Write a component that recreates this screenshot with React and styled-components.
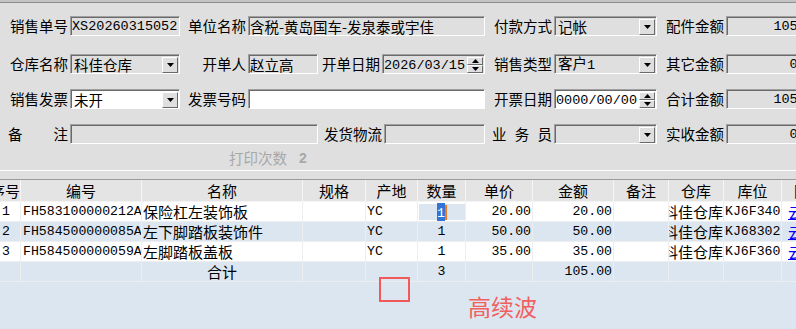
import React from 'react';
import styled, { createGlobalStyle } from 'styled-components';

const GlobalStyle = createGlobalStyle`
  html, body { margin: 0; padding: 0; background: #dfdfdf; overflow: hidden; }
  body { font-family: "Noto Sans CJK SC", "Liberation Sans", sans-serif; color: #000; }
`;

const Page = styled.div`
  width: 796px;
  height: 329px;
  overflow: hidden;
  position: relative;
  background: #dfdfdf;
  display: flex;
  flex-direction: column;
`;

const Form = styled.div`
  height: 170px;
  flex: none;
  box-sizing: border-box;
  border-top: 1px solid #c4c4c4;
  box-shadow: inset 0 1px 0 #c4c4c4, inset 0 2px 0 #8e8e8e;
  padding-top: 15px;
  padding-left: 8px;
  display: flex;
  flex-direction: column;
`;

const Row = styled.div`
  display: flex;
  align-items: center;
  height: 20px;
  margin-top: ${p => p.$top || 0}px;
`;

const Label = styled.div`
  width: ${p => p.$w}px;
  flex: none;
  box-sizing: border-box;
  padding-right: 2px;
  text-align: right;
  font-size: 14.5px;
  line-height: 20px;
  white-space: nowrap;
`;

const SpreadLabel = styled.div`
  width: ${p => p.$w}px;
  flex: none;
  box-sizing: border-box;
  padding: 0 2px 0 ${p => p.$pl || 0}px;
  display: flex;
  justify-content: space-between;
  font-size: 14.5px;
  line-height: 20px;
`;

const Field = styled.div`
  width: ${p => p.$w}px;
  height: 20px;
  flex: none;
  box-sizing: border-box;
  border: 1px solid;
  border-color: #a0a0a0 #ffffff #ffffff #a0a0a0;
  box-shadow: inset 1px 1px 0 #6a6a6a;
  background: ${p => (p.$white ? '#ffffff' : '#dfdfdf')};
  display: flex;
  align-items: center;
  justify-content: ${p => (p.$right ? 'flex-end' : 'flex-start')};
  padding: 1px ${p => (p.$right ? 1 : 0)}px 0 ${p => (p.$pl ?? 3)}px;
  overflow: hidden;
  white-space: nowrap;
  font-size: 14.5px;
  line-height: 18px;
`;

const FieldText = styled.span`
  flex: 1 1 auto;
  overflow: hidden;
`;

const Mono = styled.span`
  font-family: "Liberation Mono", "Noto Sans CJK SC", monospace;
  font-size: ${p => p.$size || 13.5}px;
`;

const DropBtn = styled.div`
  width: 16px;
  height: 16px;
  flex: none;
  margin-right: 1px;
  box-sizing: border-box;
  border: 1px solid;
  border-color: #ffffff #6a6a6a #6a6a6a #ffffff;
  background: #dfdfdf;
  display: flex;
  align-items: center;
  justify-content: center;
`;

const Spin = styled.div`
  width: 16px;
  height: 16px;
  flex: none;
  margin-right: 1px;
  display: flex;
  flex-direction: column;
`;

const SpinHalf = styled.div`
  flex: 1;
  box-sizing: border-box;
  border: 1px solid;
  border-color: #ffffff #6a6a6a #6a6a6a #ffffff;
  background: #dfdfdf;
  display: flex;
  align-items: center;
  justify-content: center;
`;

const PrintInfo = styled.div`
  padding-left: 221px;
  font-size: 14.5px;
  line-height: 20px;
  color: #a8a8a8;
  display: flex;
`;

const PrintNum = styled.span`
  margin-left: 12px;
  font-family: "Liberation Sans", sans-serif;
  font-weight: bold;
  font-size: 14px;
`;

const Separator = styled.div`
  height: 10px;
  flex: none;
  box-sizing: border-box;
  border-top: 1px solid #ffffff;
  border-bottom: 1px solid #9c9c9c;
`;

const COLS = '21px 121px 161px 63px 52px 48px 67px 81px 55px 55px 58px 40px';

const Grid = styled.div`
  flex: 1;
  background: #dce6f0;
  display: flex;
  flex-direction: column;
  width: 840px;
`;

const HeadRow = styled.div`
  display: grid;
  grid-template-columns: ${COLS};
  height: 22px;
  background: #e4e4e4;
  box-sizing: border-box;
  border-bottom: 1px solid #f4f4f4;
`;

const HeadCell = styled.div`
  box-sizing: border-box;
  border-right: 1px solid #f6f6f6;
  display: flex;
  align-items: center;
  justify-content: ${p => p.$align || 'center'};
  overflow: hidden;
  white-space: nowrap;
  font-size: 15px;
  line-height: 20px;
`;

const DataRow = styled.div`
  display: grid;
  grid-template-columns: ${COLS};
  height: 20px;
  box-sizing: border-box;
  border-bottom: 1px solid #eeeeee;
  background: ${p => (p.$alt ? '#dce6f0' : '#ffffff')};
`;

const Cell = styled.div`
  box-sizing: border-box;
  border-right: 1px solid #eeeeee;
  display: flex;
  align-items: center;
  justify-content: ${p => p.$align || 'flex-start'};
  padding: 0 ${p => p.$pr ?? 1}px 0 ${p => p.$pl ?? 1}px;
  overflow: hidden;
  white-space: nowrap;
  font-size: 15px;
  line-height: 19px;
  color: ${p => p.$color || '#000'};
`;

const Link = styled.span`
  color: #0000ff;
  text-decoration: underline;
`;

const Editor = styled.div`
  flex: 1;
  align-self: stretch;
  margin: 2px 0 1px 1px;
  background: #dce6f0;
  display: flex;
  align-items: center;
  justify-content: center;
`;

const Selected = styled.span`
  background: #3373d6;
  color: #fff;
  line-height: 15px;
`;

const Caret = styled.span`
  width: 2px;
  height: 15px;
  background: #f07a20;
`;

const Mark = styled.div`
  position: absolute;
  left: 379px;
  top: 277px;
  width: 31px;
  height: 25px;
  box-sizing: border-box;
  border: 2px solid #f25a5a;
`;

const Stamp = styled.div`
  position: absolute;
  left: 468px;
  top: 294px;
  font-size: 23px;
  line-height: 24px;
  color: #f25f5f;
`;

const Down = () => (
  <svg width="7" height="4" viewBox="0 0 7 4"><path d="M0 0h7L3.5 4z" fill="#000" /></svg>
);
const Up = () => (
  <svg width="7" height="4" viewBox="0 0 7 4"><path d="M0 4h7L3.5 0z" fill="#000" /></svg>
);

const Combo = ({ w, white, children }) => (
  <Field $w={w} $white={white} $pl={3}>
    <FieldText>{children}</FieldText>
    <DropBtn><Down /></DropBtn>
  </Field>
);

const DateBox = ({ w, white, children }) => (
  <Field $w={w} $white={white} $pl={1}>
    <FieldText><Mono>{children}</Mono></FieldText>
    <Spin>
      <SpinHalf><Up /></SpinHalf>
      <SpinHalf><Down /></SpinHalf>
    </Spin>
  </Field>
);

const rows = [
  { no: '1', code: 'FH583100000212A', name: '保险杠左装饰板', place: 'YC', qty: '1', price: '20.00', amt: '20.00', wh: '科佳仓库', loc: 'KJ6F340', sel: true },
  { no: '2', code: 'FH584500000085A', name: '左下脚踏板装饰件', place: 'YC', qty: '1', price: '50.00', amt: '50.00', wh: '科佳仓库', loc: 'KJ68302' },
  { no: '3', code: 'FH584500000059A', name: '左脚踏板盖板', place: 'YC', qty: '1', price: '35.00', amt: '35.00', wh: '科佳仓库', loc: 'KJ6F360' },
];

const headers = ['序号', '编号', '名称', '规格', '产地', '数量', '单价', '金额', '备注', '仓库', '库位', '图'];

export default function App() {
  return (
    <>
      <GlobalStyle />
      <Page>
        <Form>
          <Row>
            <Label $w={62}>销售单号</Label>
            <Field $w={110} $pl={1}><Mono>XS20260315052</Mono></Field>
            <Label $w={68}>单位名称</Label>
            <Field $w={237} $pl={1}>含税-黄岛国车-发泉泰或宇佳</Field>
            <Label $w={69}>付款方式</Label>
            <Combo w={103}>记帐</Combo>
            <Label $w={69}>配件金额</Label>
            <Field $w={98} $right><Mono>105.00</Mono></Field>
          </Row>
          <Row $top={18}>
            <Label $w={62}>仓库名称</Label>
            <Combo w={110}>科佳仓库</Combo>
            <Label $w={68}>开单人</Label>
            <Field $w={70} $pl={1}>赵立高</Field>
            <Label $w={64}>开单日期</Label>
            <DateBox w={103}>2026/03/15</DateBox>
            <Label $w={69}>销售类型</Label>
            <Combo w={103}>客户<Mono>1</Mono></Combo>
            <Label $w={69}>其它金额</Label>
            <Field $w={98} $right><Mono>0.00</Mono></Field>
          </Row>
          <Row $top={15}>
            <Label $w={62}>销售发票</Label>
            <Combo w={110} white>未开</Combo>
            <Label $w={68}>发票号码</Label>
            <Field $w={237} $white />
            <Label $w={69}>开票日期</Label>
            <DateBox w={103} white>0000/00/00</DateBox>
            <Label $w={69}>合计金额</Label>
            <Field $w={98} $right><Mono>105.00</Mono></Field>
          </Row>
          <Row $top={15}>
            <SpreadLabel $w={62}><span>备</span><span>注</span></SpreadLabel>
            <Field $w={248} />
            <Label $w={66}>发货物流</Label>
            <Field $w={101} />
            <SpreadLabel $w={69} $pl={7}><span>业</span><span>务</span><span>员</span></SpreadLabel>
            <Combo w={103} />
            <Label $w={69}>实收金额</Label>
            <Field $w={98} $right><Mono>0.00</Mono></Field>
          </Row>
          <Row $top={4}>
            <PrintInfo>打印次数<PrintNum>2</PrintNum></PrintInfo>
          </Row>
        </Form>
        <Separator />
        <Grid>
          <HeadRow>
            {headers.map((h, i) => (
              <HeadCell key={h} $align={i === 0 ? 'flex-end' : 'center'}>{h}</HeadCell>
            ))}
          </HeadRow>
          {rows.map((r, i) => (
            <DataRow key={r.no} $alt={i % 2 === 1}>
              <Cell $pl={2}><Mono $size={13.2}>{r.no}</Mono></Cell>
              <Cell $pl={2} $pr={0}><Mono $size={13.2}>{r.code}</Mono></Cell>
              <Cell>{r.name}</Cell>
              <Cell />
              <Cell><Mono $size={13.2}>{r.place}</Mono></Cell>
              {r.sel ? (
                <Cell $pl={0} $pr={0}>
                  <Editor><Selected><Mono $size={13.2}>{r.qty}</Mono></Selected><Caret /></Editor>
                </Cell>
              ) : (
                <Cell $align="center"><Mono $size={13.2}>{r.qty}</Mono></Cell>
              )}
              <Cell $align="flex-end"><Mono $size={13.2}>{r.price}</Mono></Cell>
              <Cell $align="flex-end"><Mono $size={13.2}>{r.amt}</Mono></Cell>
              <Cell />
              <Cell $align="flex-end" $pr={0} $pl={0}>{r.wh}</Cell>
              <Cell $pl={1} $pr={0}><Mono $size={13.2}>{r.loc}</Mono></Cell>
              <Cell $pl={6}><Link>云图</Link></Cell>
            </DataRow>
          ))}
          <DataRow $alt>
            <Cell />
            <Cell />
            <Cell $align="center">合计</Cell>
            <Cell />
            <Cell />
            <Cell $align="center"><Mono $size={13.2}>3</Mono></Cell>
            <Cell />
            <Cell $align="flex-end"><Mono $size={13.2}>105.00</Mono></Cell>
            <Cell />
            <Cell />
            <Cell />
            <Cell />
          </DataRow>
        </Grid>
        <Mark />
        <Stamp>高续波</Stamp>
      </Page>
    </>
  );
}
